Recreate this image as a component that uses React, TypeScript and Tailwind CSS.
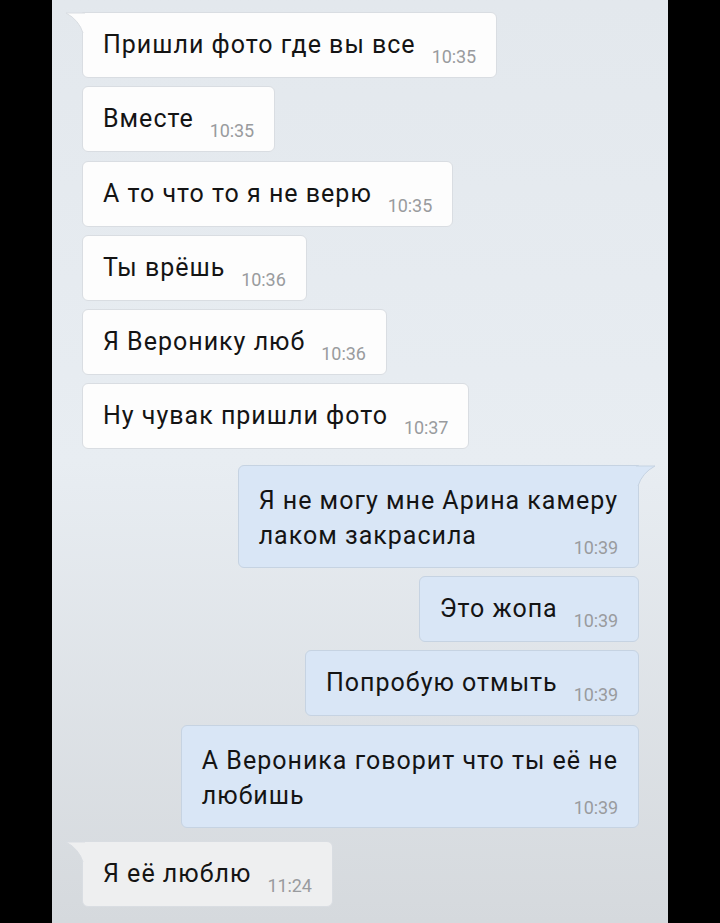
import React from 'react';

type Msg = {
  out: boolean;
  lines: string[];
  time: string;
  tail?: boolean;
};

const messages: Msg[] = [
  { out: false, lines: ['Пришли фото где вы все'], time: '10:35', tail: true },
  { out: false, lines: ['Вместе'], time: '10:35' },
  { out: false, lines: ['А то что то я не верю'], time: '10:35' },
  { out: false, lines: ['Ты врёшь'], time: '10:36' },
  { out: false, lines: ['Я Веронику люб'], time: '10:36' },
  { out: false, lines: ['Ну чувак пришли фото'], time: '10:37' },
  { out: true, lines: ['Я не могу мне Арина камеру', 'лаком закрасила'], time: '10:39', tail: true },
  { out: true, lines: ['Это жопа'], time: '10:39' },
  { out: true, lines: ['Попробую отмыть'], time: '10:39' },
  { out: true, lines: ['А Вероника говорит что ты её не', 'любишь'], time: '10:39' },
  { out: false, lines: ['Я её люблю'], time: '11:24', tail: true },
];

const Time = ({ t }: { t: string }) => (
  <span className="shrink-0 text-[18px] leading-[18px] text-[#999b9e] tracking-[-0.1px] mb-[-4px]">{t}</span>
);

const Tail = ({ out, last }: { out: boolean; last?: boolean }) => {
  const fill = out ? '#d9e6f6' : last ? '#eeeff0' : '#fdfdfd';
  const stroke = out ? '#c6d3e2' : '#d9dde2';
  if (out) {
    return (
      <svg className="absolute top-[-1px] right-[-19px]" width="21" height="22" viewBox="0 0 21 22">
        <path d="M0 1 L19 1 Q6 8 2 21 L0 21 Z" fill={fill} />
        <path d="M0 1 L19 1 Q6 8 2 21" fill="none" stroke={stroke} strokeWidth="1" />
      </svg>
    );
  }
  return (
    <svg className="absolute top-[-1px] left-[-19px]" width="21" height="22" viewBox="0 0 21 22">
      <path d="M21 1 L2 1 Q15 8 19 21 L21 21 Z" fill={fill} />
      <path d="M21 1 L2 1 Q15 8 19 21" fill="none" stroke={stroke} strokeWidth="1" />
    </svg>
  );
};

const Bubble = ({ m, last, gapTop }: { m: Msg; last?: boolean; gapTop?: string }) => {
  const multi = m.lines.length > 1;
  const color = m.out
    ? 'bg-[#d9e6f6] border-[#c6d3e2]'
    : last
    ? 'bg-[#eeeff0] border-[#d9dde2]'
    : 'bg-[#fdfdfd] border-[#d9dde2]';
  const corner = m.tail ? (m.out ? 'rounded-tr-none' : 'rounded-tl-none') : '';
  return (
    <div className={`flex ${gapTop ?? ''} ${m.out ? 'justify-end pr-[29px]' : 'justify-start pl-[30px]'}`}>
      <div
        className={`relative border rounded-[6px] ${color} ${corner} pl-[20px] pr-[20px] ${
          multi ? 'pt-[17px] pb-[14px]' : 'pt-[14px] pb-[15px]'
        } text-[25px] leading-[35px] tracking-[1px] text-[#141414]`}
      >
        {m.tail && <Tail out={m.out} last={last} />}
        {multi ? (
          <>
            <div>{m.lines[0]}</div>
            <div className="flex items-end justify-between gap-[16px]">
              <span>{m.lines[1]}</span>
              <Time t={m.time} />
            </div>
          </>
        ) : (
          <div className="flex items-end gap-[16px]">
            <span>{m.lines[0]}</span>
            <Time t={m.time} />
          </div>
        )}
      </div>
    </div>
  );
};

export default function App() {
  return (
    <div className="w-[720px] h-[923px] flex bg-black overflow-hidden" style={{ fontFamily: 'Roboto, "Liberation Sans", sans-serif' }}>
      <div className="w-[52px] shrink-0 bg-black" />
      <div className="w-[616px] shrink-0 h-full bg-gradient-to-b from-[#e3e8ed] via-[#e8edf2] to-[#d5d9dd] pt-[12px] flex flex-col gap-[8.3px]">
        {messages.slice(0, 6).map((m, i) => (
          <Bubble key={i} m={m} />
        ))}
        {messages.slice(6, 10).map((m, i) => (
          <Bubble key={i + 6} m={m} gapTop={i === 0 ? 'mt-[7px]' : undefined} />
        ))}
        <Bubble m={messages[10]} last gapTop="mt-[5px]" />
      </div>
      <div className="w-[52px] shrink-0 bg-black" />
    </div>
  );
}
